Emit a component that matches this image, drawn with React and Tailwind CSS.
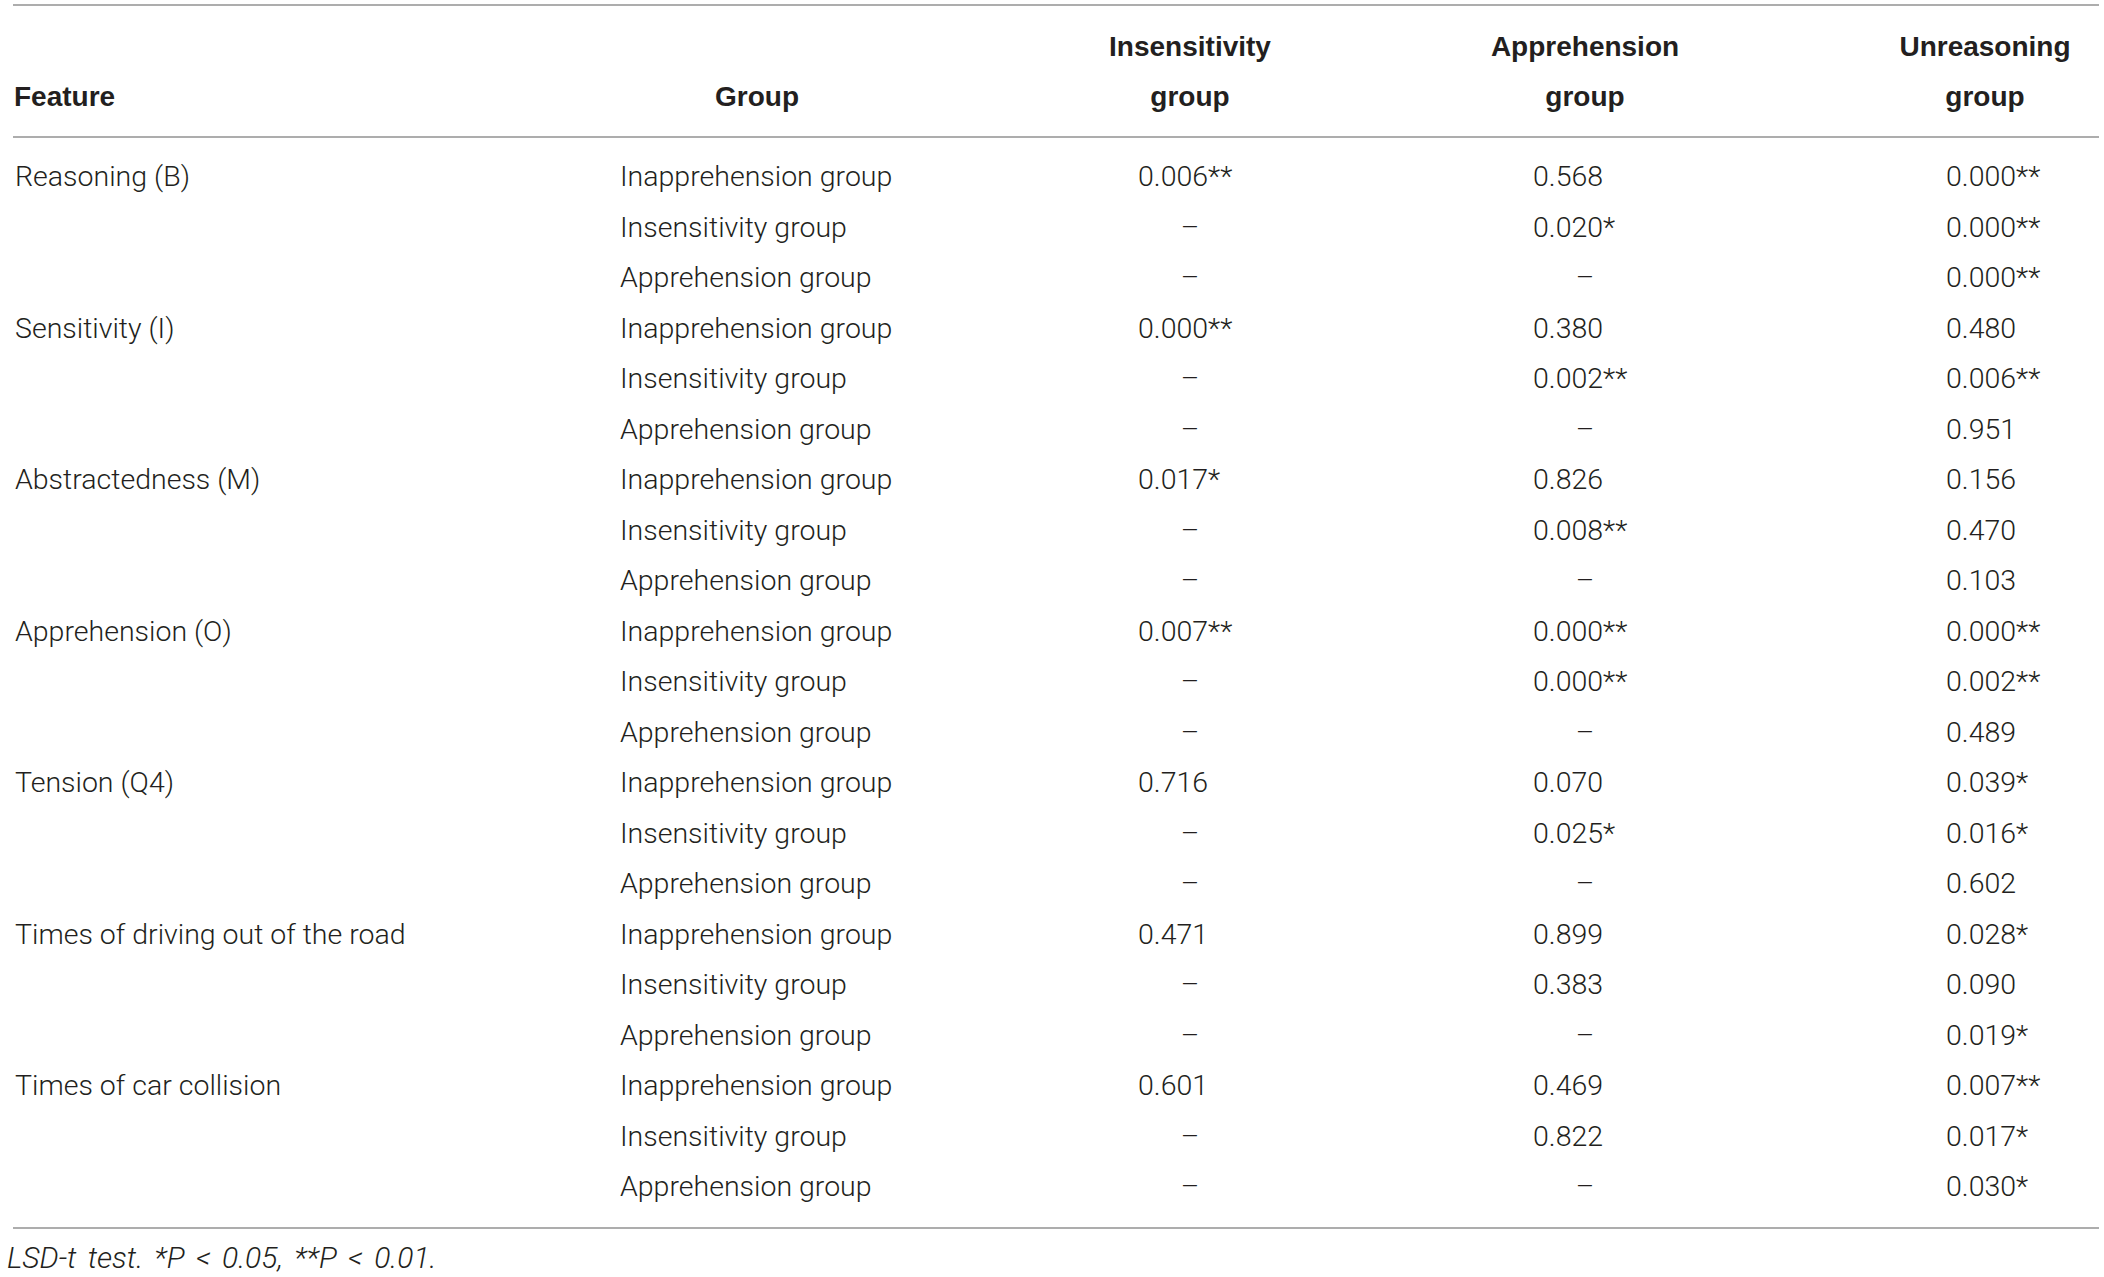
const rows = [
  ['Reasoning (B)', 'Inapprehension group', '0.006**', '0.568', '0.000**'],
  ['', 'Insensitivity group', '–', '0.020*', '0.000**'],
  ['', 'Apprehension group', '–', '–', '0.000**'],
  ['Sensitivity (I)', 'Inapprehension group', '0.000**', '0.380', '0.480'],
  ['', 'Insensitivity group', '–', '0.002**', '0.006**'],
  ['', 'Apprehension group', '–', '–', '0.951'],
  ['Abstractedness (M)', 'Inapprehension group', '0.017*', '0.826', '0.156'],
  ['', 'Insensitivity group', '–', '0.008**', '0.470'],
  ['', 'Apprehension group', '–', '–', '0.103'],
  ['Apprehension (O)', 'Inapprehension group', '0.007**', '0.000**', '0.000**'],
  ['', 'Insensitivity group', '–', '0.000**', '0.002**'],
  ['', 'Apprehension group', '–', '–', '0.489'],
  ['Tension (Q4)', 'Inapprehension group', '0.716', '0.070', '0.039*'],
  ['', 'Insensitivity group', '–', '0.025*', '0.016*'],
  ['', 'Apprehension group', '–', '–', '0.602'],
  ['Times of driving out of the road', 'Inapprehension group', '0.471', '0.899', '0.028*'],
  ['', 'Insensitivity group', '–', '0.383', '0.090'],
  ['', 'Apprehension group', '–', '–', '0.019*'],
  ['Times of car collision', 'Inapprehension group', '0.601', '0.469', '0.007**'],
  ['', 'Insensitivity group', '–', '0.822', '0.017*'],
  ['', 'Apprehension group', '–', '–', '0.030*'],
]

const cols = 'grid grid-cols-[420px_648px_218px_572px_228px]'

const Value = ({ v, box }) => {
  if (v === '–') return <div className="text-center">–</div>
  return (
    <div className="flex justify-center">
      <span className={`inline-block text-left whitespace-nowrap ${box}`}>{v}</span>
    </div>
  )
}

export default function App() {
  return (
    <div className="bg-white w-[2104px] h-[1277px] overflow-hidden pt-[4px] text-[#231f20]">
      <div className="ml-[13px] w-[2086px]">
        <div className="border-t-2 border-[#adadad]"></div>

        <div
          className={`${cols} pt-[16px] pb-[14px] font-bold text-[28px] leading-[50px] border-b-2 border-[#adadad]`}
          style={{ fontFamily: '"Liberation Sans", Arial, sans-serif' }}
        >
          <div className="flex items-end pl-[1px]">Feature</div>
          <div className="flex items-end justify-center">Group</div>
          <div className="text-center">Insensitivity<br />group</div>
          <div className="text-center">Apprehension<br />group</div>
          <div className="text-center">Unreasoning<br />group</div>
        </div>

        <div
          className="py-[14px] text-[28.5px] font-light leading-[50.5px] border-b-2 border-[#adadad]"
          style={{ fontFamily: 'Roboto, "Liberation Sans", sans-serif' }}
        >
          {rows.map((r, i) => (
            <div key={i} className={cols}>
              <div className="pl-[2px] whitespace-nowrap">{r[0]}</div>
              <div className="pl-[187px] whitespace-nowrap">{r[1]}</div>
              <Value v={r[2]} box="w-[104px]" />
              <Value v={r[3]} box="w-[104px]" />
              <Value v={r[4]} box="w-[78px]" />
            </div>
          ))}
        </div>
      </div>

      <p
        className="mt-[13px] pl-[7px] text-[30px] leading-[32px] italic font-light [word-spacing:4px]"
        style={{ fontFamily: 'Roboto, "Liberation Sans", sans-serif' }}
      >
        LSD-t test. *P {'<'} 0.05, **P {'<'} 0.01.
      </p>
    </div>
  )
}
